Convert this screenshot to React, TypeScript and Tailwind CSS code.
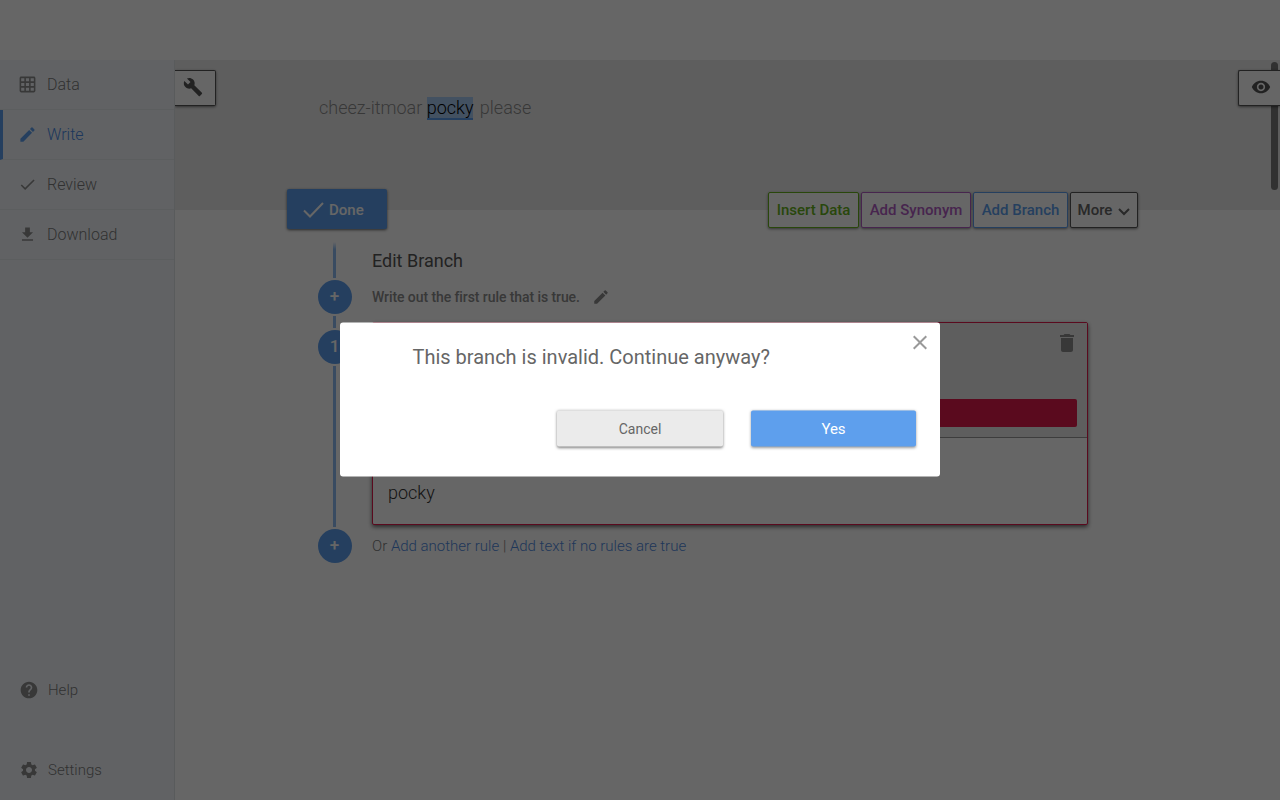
import React from "react";
import {
  MdGridOn, MdModeEdit, MdCheck, MdFileDownload, MdBuild, MdRemoveRedEye,
  MdDelete, MdHelp, MdSettings, MdClose,
} from "react-icons/md";

function NavItem({ icon, label, active = false }: { icon: React.ReactNode; label: string; active?: boolean }) {
  return (
    <a
      className={
        "flex h-[50px] items-center border-b border-[#e6eaee] text-[16px] leading-5 font-light " +
        (active ? "border-l-[3px] border-l-[#5e9fed] pl-[15px] text-[#4a8ae6]" : "pl-[18px] text-[#7c7c7c]")
      }
    >
      <span className={"flex w-[29px] " + (active ? "text-[#5e9fed]" : "text-[#8c8c8c]")}>{icon}</span>
      {label}
    </a>
  );
}

function ToolButton({ className, children }: { className: string; children: React.ReactNode }) {
  return (
    <button
      className={
        "flex h-9 items-center justify-center rounded-[2px] border bg-white pt-px text-[15px] font-medium shadow-[0_1px_3px_rgba(0,0,0,0.5)] " +
        className
      }
    >
      {children}
    </button>
  );
}

function Node({ children }: { children: React.ReactNode }) {
  return (
    <div className="flex h-[34px] w-[34px] shrink-0 items-center justify-center rounded-full bg-[#5e9fed] pr-px pb-px text-[17px] font-medium text-white">
      {children}
    </div>
  );
}

export default function App() {
  return (
    <div className="relative flex h-[800px] w-[1280px] flex-col overflow-hidden bg-white font-['Roboto','Liberation_Sans',sans-serif]">
      <header className="h-[60px] shrink-0 bg-white" />
      <div className="flex flex-1">
        <nav className="flex w-[175px] shrink-0 flex-col border-r border-[#dfe3e7] bg-[#f2f6fa]">
          <NavItem icon={<MdGridOn size={19} />} label="Data" />
          <NavItem icon={<MdModeEdit size={19} />} label="Write" active />
          <NavItem icon={<MdCheck size={19} />} label="Review" />
          <NavItem icon={<MdFileDownload size={19} />} label="Download" />
          <div className="mt-auto flex flex-col gap-[60px] pb-5 pl-[19px] text-[15px] leading-5 font-light text-[#7c7c7c]">
            <a className="flex items-center gap-[9px]"><MdHelp size={20} className="text-[#8c8c8c]" />Help</a>
            <a className="flex items-center gap-[9px]"><MdSettings size={20} className="text-[#8c8c8c]" />Settings</a>
          </div>
        </nav>

        <main className="relative flex-1">
          <section className="flex h-[150px] items-start justify-between overflow-hidden bg-[#ececec] pt-[10px]">
            <button className="flex h-9 w-[41px] items-center justify-center rounded-r-[2px] border border-l-0 border-[#555] bg-white pr-1 pb-[2px] text-[#555] shadow-[0_1px_3px_rgba(0,0,0,0.5)]">
              <MdBuild size={20} />
            </button>
            <p className="mt-[27px] ml-[103px] flex-1 text-[18px] leading-[22px] font-light whitespace-pre text-[#8c8c8c]">
              cheez-itmoar <span className="inline-block h-[23px] border-b-2 border-[#5e9fed] bg-[#a9cbf3] text-black">pocky</span>{" "}
              <span className="ml-[2px]">please</span>
            </p>
            <button className="relative z-10 flex h-9 w-[42px] items-center justify-center rounded-l-[2px] border border-r-0 border-[#555] bg-white pl-[2px] pb-[2px] text-[#555] shadow-[0_1px_3px_rgba(0,0,0,0.5)]">
              <MdRemoveRedEye size={20} />
            </button>
          </section>
          <div className="absolute top-[2px] right-[2px] h-[128px] w-[7px] rounded-full bg-[#7a7a7a]" />

          <div className="relative -mt-[21px] ml-[112px] flex w-[851px] items-start justify-between">
            <button className="flex h-10 w-[100px] items-center rounded-[2px] bg-[#5e9fed] pt-[2px] pl-4 text-[15px] font-medium text-white shadow-[0_1px_3px_rgba(0,0,0,0.6)]">
              <svg width="21" height="16" viewBox="0 0 21 16" className="mr-[5px]" fill="none" stroke="currentColor" strokeWidth="2">
                <path d="M1 8.5 7 14.5 20 1" />
              </svg>
              Done
            </button>
            <div className="mt-[3px] flex gap-[2px]">
              <ToolButton className="w-[91px] border-[#66b21c] text-[#66b21c]">Insert Data</ToolButton>
              <ToolButton className="w-[110px] border-[#b25cc4] text-[#b25cc4]">Add Synonym</ToolButton>
              <ToolButton className="w-[95px] border-[#5e9fed] text-[#5e9fed]">Add Branch</ToolButton>
              <ToolButton className="w-[68px] border-[#555] text-[#666]">
                More
                <svg width="12" height="8" viewBox="0 0 12 8" className="mt-[2px] ml-[6px]" fill="none" stroke="currentColor" strokeWidth="2">
                  <path d="M1 1 6 6 11 1" />
                </svg>
              </ToolButton>
            </div>
          </div>

          <div className="mt-[13px] ml-[143px] flex">
            <div className="flex w-[34px] flex-col items-center gap-[2px]">
              <div className="mr-[1px] h-9 w-[3px] bg-gradient-to-b from-[#8fbcf2]/0 to-[#8fbcf2] to-20%" />
              <Node>+</Node>
              <div className="mr-[1px] h-3 w-[3px] bg-[#8fbcf2]" />
              <Node>1</Node>
              <div className="mr-[1px] h-[161px] w-[3px] bg-[#8fbcf2]" />
              <Node>+</Node>
            </div>
            <div className="ml-5 w-[716px]">
              <h2 className="pt-[8px] text-[18px] leading-[22px] text-[#555]">Edit Branch</h2>
              <div className="mt-[15px] flex h-5 items-center gap-3 text-[14px] font-medium tracking-[-0.08px] text-[#8c8c8c]">
                Write out the first rule that is true.
                <MdModeEdit size={18} />
              </div>
              <div className="mt-[15px] h-[203px] rounded-[2px] border border-[#e1194b] bg-white shadow-[0_2px_4px_rgba(0,0,0,0.6)]">
                <div className="flex h-[115px] flex-col justify-between border-b border-[#999] bg-[#ececec] px-[10px] pb-[10px]">
                  <MdDelete size={24} className="mt-2 -mr-[2px] self-end text-[#8c8c8c]" />
                  <div className="h-7 rounded-[2px] bg-[#e1194b]" />
                </div>
                <p className="pt-[44px] pl-[15px] text-[18px] leading-[22px] font-light text-[#333]">pocky</p>
              </div>
              <p className="mt-[11px] text-[15px] leading-5 font-light text-[#7c7c7c]">
                Or <a className="text-[#4f8ae0]">Add another rule</a> | <a className="text-[#4f8ae0]">Add text if no rules are true</a>
              </p>
            </div>
          </div>
        </main>
      </div>

      <div className="absolute inset-0 z-20 flex items-start justify-center bg-black/60 pt-[322px]">
        <div role="dialog" className="h-[154px] w-[600px] translate-y-[0.5px] rounded-[3px] bg-white">
          <div className="flex items-start justify-between pt-2 pr-2 pl-[72.5px]">
            <h1 className="mt-[14px] text-[20px] leading-6 text-[#666]">This branch is invalid. Continue anyway?</h1>
            <MdClose size={24} className="text-[#999]" />
          </div>
          <div className="mt-[42px] flex justify-end gap-7 pr-6 text-[14px]">
            <button className="h-9 w-[166px] rounded-[2px] bg-[#ebebeb] text-[#666] shadow-[0_1px_3px_rgba(0,0,0,0.5)]">Cancel</button>
            <button className="h-9 w-[165px] rounded-[2px] bg-[#5e9fed] text-[15px] text-white shadow-[0_1px_3px_rgba(0,0,0,0.4)]">Yes</button>
          </div>
        </div>
      </div>
    </div>
  );
}
